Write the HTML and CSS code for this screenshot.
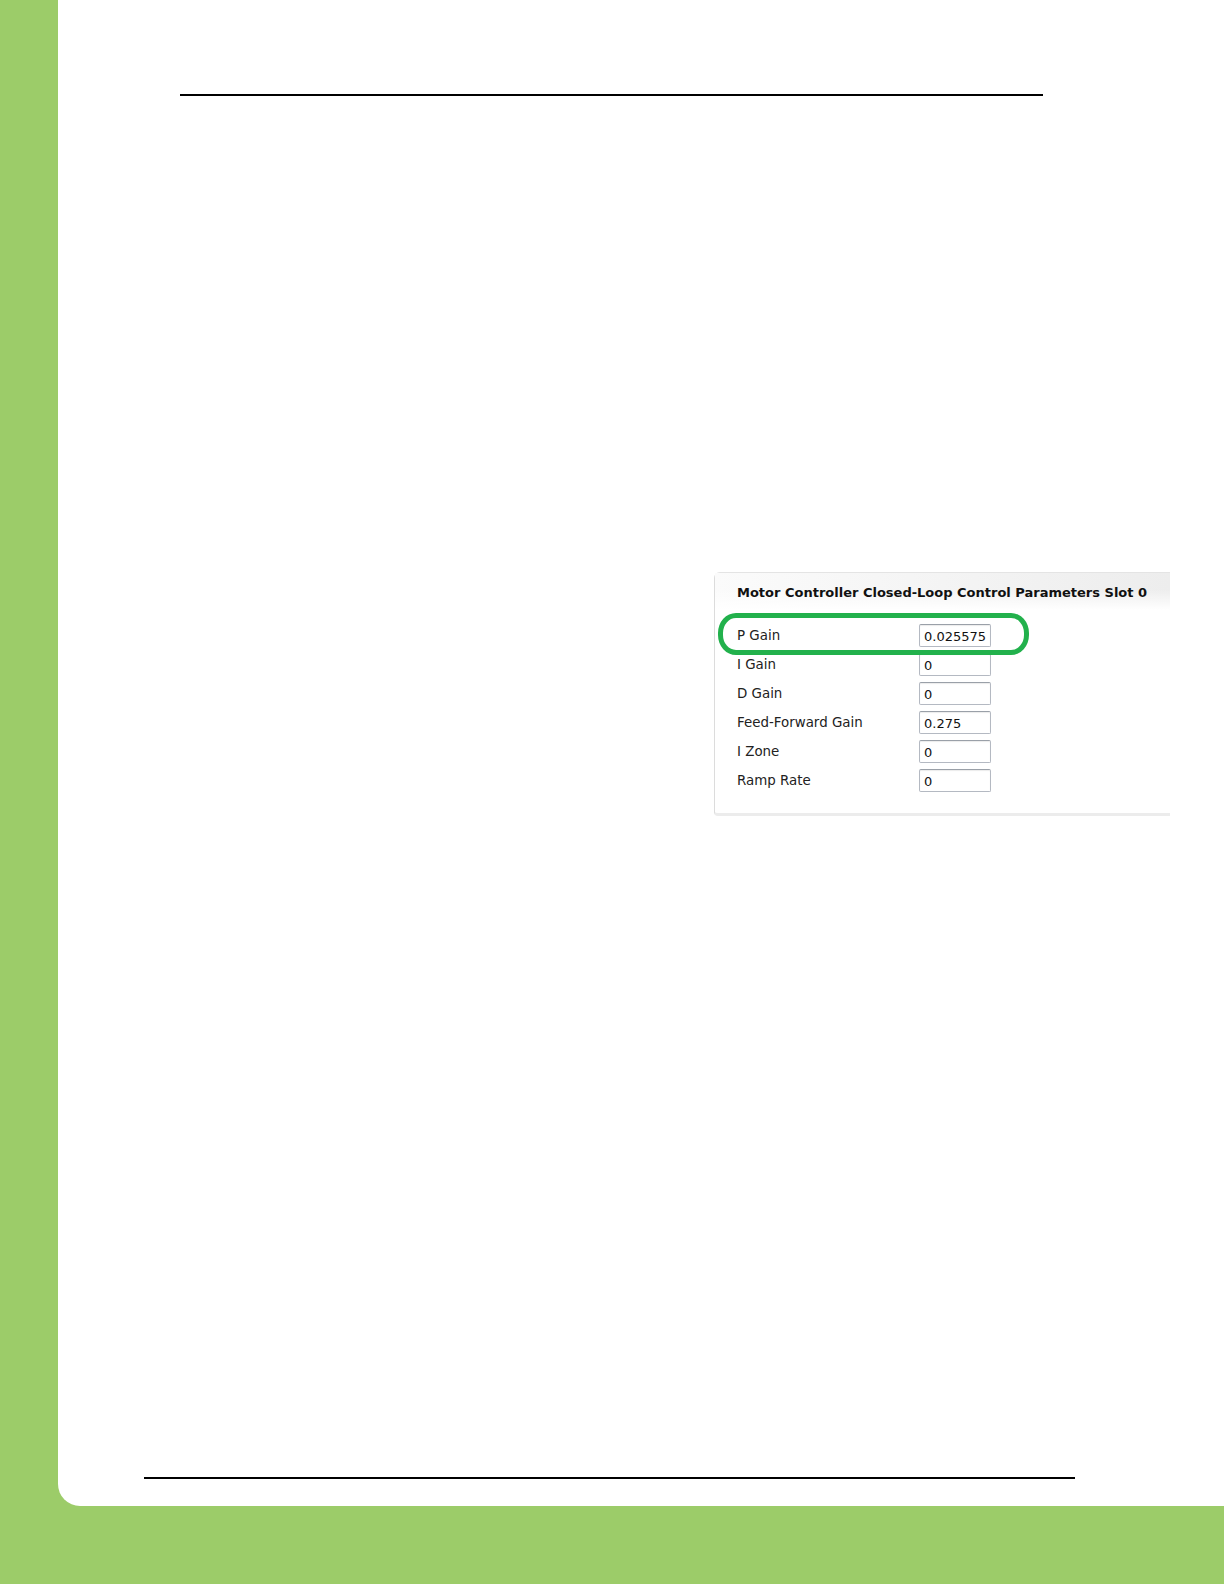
FILE: index.html
```html
<!DOCTYPE html>
<html lang="en">
<head>
  <meta charset="UTF-8" />
  <meta name="viewport" content="width=device-width, initial-scale=1.0" />
  <title>Closed-Loop Control Parameters</title>
  <link rel="stylesheet" href="styles.css">
</head>
<body>
  <div class="page">
    <div class="rule-top"></div>

    <div class="panel">
      <div class="panel-head">Motor Controller Closed-Loop Control Parameters Slot 0</div>
      <div class="params">
        <label>P Gain</label><input type="text" value="0.025575" />
        <label>I Gain</label><input type="text" value="0" />
        <label>D Gain</label><input type="text" value="0" />
        <label>Feed-Forward Gain</label><input type="text" value="0.275" />
        <label>I Zone</label><input type="text" value="0" />
        <label>Ramp Rate</label><input type="text" value="0" />
      </div>
      <div class="marker"></div>
    </div>

    <div class="rule-bottom"></div>
  </div>
</body>
</html>
```

FILE: styles.css
```css
body {
  margin: 0;
  padding: 0;
  background: #9ccc69;
  font-family: 'DejaVu Sans', Tahoma, sans-serif;
}
.page {
  margin-left: 58px;
  height: 1506px;
  background: #fff;
  border-bottom-left-radius: 22px;
  padding-top: 94px;
  box-sizing: border-box;
  overflow: hidden;
}
.rule-top {
  margin-left: 122px;
  width: 863px;
  height: 2px;
  background: #000;
}
.panel {
  position: relative;
  margin-top: 476px;
  margin-left: 656px;
  width: 456px;
  box-sizing: border-box;
  border-left: 1px solid #dcdcdc;
  border-top: 1px solid #e4e4e4;
  border-bottom: 3px solid #ececec;
  border-top-left-radius: 6px;
  border-bottom-left-radius: 4px;
  padding-bottom: 15px;
}
.panel-head {
  padding: 12px 0 0 22px;
  height: 37px;
  box-sizing: border-box;
  font-size: 13px;
  font-weight: bold;
  color: #111;
  background:
    linear-gradient(to bottom, rgba(255,255,255,0) 45%, #fff),
    linear-gradient(to right, #fbfbfb, #ededed);
}
.params {
  display: grid;
  grid-template-columns: 182px 72px;
  grid-auto-rows: 29px;
  padding: 14px 0 0 22px;
  align-items: start;
}
.params label {
  font-size: 13.4px;
  color: #222;
  line-height: 23px;
}
.params input {
  width: 72px;
  height: 23px;
  box-sizing: border-box;
  margin: 0;
  padding: 1px 0 0 4px;
  font-family: 'DejaVu Sans', Tahoma, sans-serif;
  font-size: 13px;
  color: #111;
  border: 1px solid #b4b9c2;
  border-top-color: #9aa0a8;
  border-radius: 2px;
  box-shadow: inset 0 1px 1px rgba(0,0,0,0.08);
  background: #fff;
}
.marker {
  position: absolute;
  left: 3px;
  top: 40px;
  width: 311px;
  height: 42px;
  box-sizing: border-box;
  border: 5px solid #22b14c;
  border-radius: 18px / 20px;
}
.rule-bottom {
  margin-top: 661px;
  margin-left: 86px;
  width: 931px;
  height: 2px;
  background: #000;
}
```
